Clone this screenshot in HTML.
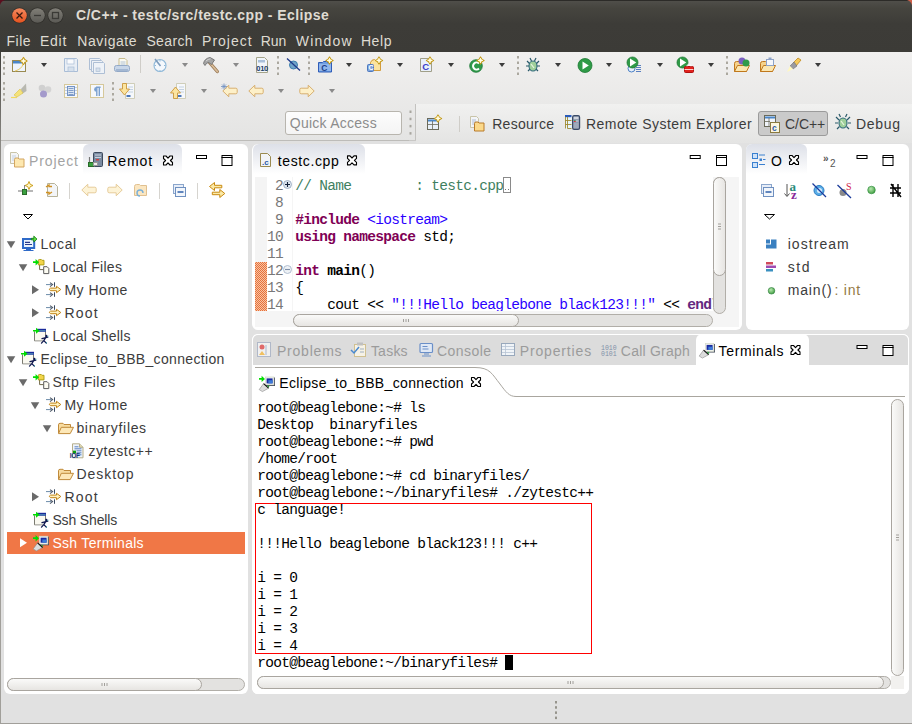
<!DOCTYPE html><html><head><meta charset="utf-8"><style>
html,body{margin:0;padding:0;}
body{width:912px;height:724px;position:relative;overflow:hidden;background:#e1e1e1;font-family:"Liberation Sans",sans-serif;}
div{position:absolute;box-sizing:border-box;}
.t{white-space:pre;line-height:1;}
</style></head><body>
<div style="left:0px;top:0px;width:912px;height:52px;background:linear-gradient(#3f3e3a 0px,#4f4e49 1.5px,#46453f 8px,#3d3c38 24px,#3c3b37 52px);"></div>
<div style="left:0px;top:0px;width:912px;height:1px;background:#2c2b28;"></div>
<svg style="position:absolute;left:0;top:0" width="912" height="8"><path d="M0 0H5Q1.2 1.2 0 5Z" fill="#5a0f1e"/><path d="M912 0H907Q910.8 1.2 912 5Z" fill="#d0604a"/></svg>
<svg style="position:absolute;left:0;top:0" width="70" height="30">
<defs><linearGradient id="gc" x1="0" y1="0" x2="0" y2="1"><stop offset="0" stop-color="#f68a5f"/><stop offset="1" stop-color="#e5531f"/></linearGradient>
<linearGradient id="gg" x1="0" y1="0" x2="0" y2="1"><stop offset="0" stop-color="#807e77"/><stop offset="1" stop-color="#5b5a55"/></linearGradient></defs>
<circle cx="19.5" cy="15.5" r="8" fill="#2f2e2a"/><circle cx="19.5" cy="15.5" r="7.3" fill="url(#gc)"/>
<path d="M16.5 12.5L22.5 18.5M22.5 12.5L16.5 18.5" stroke="#3a1a10" stroke-width="1.3"/>
<circle cx="37.5" cy="15.5" r="8" fill="#2f2e2a"/><circle cx="37.5" cy="15.5" r="7.3" fill="url(#gg)"/>
<path d="M34 15.5H41" stroke="#3b3a36" stroke-width="1.3"/>
<circle cx="55.5" cy="15.5" r="8" fill="#2f2e2a"/><circle cx="55.5" cy="15.5" r="7.3" fill="url(#gg)"/>
<rect x="52.5" y="12.5" width="6" height="6" fill="none" stroke="#3b3a36" stroke-width="1.3"/>
</svg>
<div class="t" style="left:76.00px;top:8px;font-size:14px;color:#dfdbd2;font-family:'Liberation Sans', sans-serif;font-weight:700;letter-spacing:0.431px;">C/C++ - testc/src/testc.cpp - Eclipse</div>
<div class="t" style="left:6.40px;top:34px;font-size:14px;color:#dfdbd2;font-family:'Liberation Sans', sans-serif;font-weight:400;letter-spacing:0.553px;">File</div>
<div class="t" style="left:40.00px;top:34px;font-size:14px;color:#dfdbd2;font-family:'Liberation Sans', sans-serif;font-weight:400;letter-spacing:0.750px;">Edit</div>
<div class="t" style="left:77.30px;top:34px;font-size:14px;color:#dfdbd2;font-family:'Liberation Sans', sans-serif;font-weight:400;letter-spacing:0.581px;">Navigate</div>
<div class="t" style="left:146.40px;top:34px;font-size:14px;color:#dfdbd2;font-family:'Liberation Sans', sans-serif;font-weight:400;letter-spacing:0.364px;">Search</div>
<div class="t" style="left:202.10px;top:34px;font-size:14px;color:#dfdbd2;font-family:'Liberation Sans', sans-serif;font-weight:400;letter-spacing:0.993px;">Project</div>
<div class="t" style="left:260.80px;top:34px;font-size:14px;color:#dfdbd2;font-family:'Liberation Sans', sans-serif;font-weight:400;letter-spacing:-0.145px;">Run</div>
<div class="t" style="left:295.80px;top:34px;font-size:14px;color:#dfdbd2;font-family:'Liberation Sans', sans-serif;font-weight:400;letter-spacing:1.192px;">Window</div>
<div class="t" style="left:360.90px;top:34px;font-size:14px;color:#dfdbd2;font-family:'Liberation Sans', sans-serif;font-weight:400;letter-spacing:0.577px;">Help</div>
<div style="left:1px;top:52px;width:911px;height:88px;background:linear-gradient(#f1f0ef 0px,#e4e4e3 88px);"></div>
<div style="left:0px;top:52px;width:1px;height:672px;background:linear-gradient(#3f3e3a 0px,#8a8883 90px,#a19f9a 150px,#a19f9a 672px);"></div>
<div style="left:1px;top:140px;width:911px;height:1px;background:#c9c8c6;"></div>
<div style="left:1px;top:141px;width:911px;height:553px;background:#e1e1e1;"></div>
<div style="left:1px;top:694px;width:911px;height:29px;background:#e1e1e1;"></div>
<div style="left:0px;top:723px;width:912px;height:1px;background:#a19f9a;"></div>
<div style="left:4px;top:144px;width:244px;height:550px;background:#fff;border-radius:6px;"></div>
<div style="left:252px;top:144px;width:490px;height:186px;background:#fff;border-radius:6px;"></div>
<div style="left:746px;top:144px;width:163px;height:186px;background:#fff;border-radius:6px;"></div>
<div style="left:252px;top:334px;width:657px;height:360px;background:#fff;border-radius:6px;"></div>
<svg style="position:absolute;left:0;top:0" width="912" height="141"><rect x="3" y="56.0" width="2" height="2.5" fill="#aba89f"/><rect x="3" y="61.5" width="2" height="2.5" fill="#aba89f"/><rect x="3" y="67.0" width="2" height="2.5" fill="#aba89f"/><rect x="3" y="72.5" width="2" height="2.5" fill="#aba89f"/><rect x="12.5" y="60.5" width="13" height="11" fill="#eef4fb" stroke="#9a8a50"/><rect x="13" y="61" width="12" height="2.5" fill="#4a86c8"/><path d="M15 71Q22 69 23 64" stroke="#e8c860" fill="none"/><path d="M23.5 57.4Q24.46 60.04 27.1 61Q24.46 61.96 23.5 64.6Q22.54 61.96 19.9 61Q22.54 60.04 23.5 57.4Z" fill="#fff3b8" stroke="#c39a1a" stroke-width="1.1" stroke-linejoin="round"/><path d="M23.5 58.6V63.39999999999999M21.099999999999998 61H25.900000000000002" stroke="#fffdf0" stroke-width="0.8"/><path d="M41 63h6l-3 4z" fill="#3c3c3c"/><path d="M64.5 58.5h12l1 1v12h-13z" fill="#e9eef5" stroke="#a9bdd6"/><rect x="67" y="59" width="7" height="5" fill="#fafbfd" stroke="#a9bdd6" stroke-width="0.7"/><rect x="68" y="67" width="6" height="4.5" fill="#d6e0ec" stroke="#a9bdd6" stroke-width="0.7"/><path d="M89.5 58.5h10l1 1v10h-11z" fill="#eef2f7" stroke="#aebfd5"/><path d="M91.5 60.5h10l1 1v10h-11z" fill="#eef2f7" stroke="#aebfd5"/><path d="M93.5 62.5h10l1 1v10h-11z" fill="#eef2f7" stroke="#aebfd5"/><rect x="96" y="68" width="4" height="3.5" fill="#d6e0ec" stroke="#aebfd5" stroke-width="0.7"/><path d="M119 58.5h6l2 2v6h-8z" fill="#fbfaf2" stroke="#c9bd8e"/><path d="M120.5 62h5M120.5 64h5" stroke="#9fb2cc" stroke-width="0.8"/><rect x="114.5" y="65.5" width="15" height="6" rx="2" fill="#c8d6e8" stroke="#93a9c7"/><rect x="116" y="69" width="12" height="2" fill="#a3b7d2"/><rect x="140" y="55" width="1" height="18" fill="#cfcdc8"/><circle cx="160" cy="65.5" r="6" fill="#f4f8fc" stroke="#8fb8d8" stroke-width="1.1"/><path d="M155 59L160.5 66" stroke="#7d9cbc" stroke-width="1.6"/><path d="M160 60v1.5M160 70v1.5M154.5 65.5h1.5M164 65.5h1.5" stroke="#8fb8d8"/><path d="M182 63h6l-3 4z" fill="#8a8a8a"/><path d="M209.5 62.5L217.3 71.5" stroke="#9a7a58" stroke-width="3.4" stroke-linecap="round"/><path d="M209.5 62.5L217.3 71.5" stroke="#d8bc98" stroke-width="1.8" stroke-linecap="round"/><path d="M203.5 63.5Q204.5 58.5 210 57.5L214.5 60L211.5 64.5L208.5 62.5Q206.5 62.5 205 65.5Z" fill="#a4a4a4" stroke="#6f6f6f" stroke-width="0.9" stroke-linejoin="round"/><path d="M206 61Q208 59 210.5 58.8" stroke="#d8d8d8" stroke-width="0.9" fill="none"/><path d="M233 63h6l-3 4z" fill="#8a8a8a"/><path d="M256.5 57.5h8l3 3v12h-11z" fill="#f1f5fa" stroke="#a5a48a"/><rect x="258" y="60" width="7" height="2.5" fill="#a9c0da"/><text x="256.3" y="71.3" font-family="Liberation Sans" font-weight="700" font-size="7.5" fill="#24406a" letter-spacing="-0.3">010</text><rect x="277" y="56.0" width="2" height="2.5" fill="#aba89f"/><rect x="277" y="61.5" width="2" height="2.5" fill="#aba89f"/><rect x="277" y="67.0" width="2" height="2.5" fill="#aba89f"/><rect x="277" y="72.5" width="2" height="2.5" fill="#aba89f"/><circle cx="293.5" cy="65" r="4" fill="#6fa3c8" stroke="#3f7fae"/><path d="M287 58.5L300 70.5" stroke="#1f3a8a" stroke-width="1.3"/><rect x="308" y="56.0" width="2" height="2.5" fill="#aba89f"/><rect x="308" y="61.5" width="2" height="2.5" fill="#aba89f"/><rect x="308" y="67.0" width="2" height="2.5" fill="#aba89f"/><rect x="308" y="72.5" width="2" height="2.5" fill="#aba89f"/><path d="M318.5 62.5h4l1 -1h3l1 1h4v9.5h-13z" fill="#6e9ee0" stroke="#2f5cb8"/><rect x="319" y="64" width="12" height="7" fill="#8fb6ec"/><text x="321.3" y="70.8" font-family="Liberation Sans" font-weight="700" font-size="8.5" fill="#1d3f8a">C</text><path d="M329.5 56.9Q330.46 59.54 333.1 60.5Q330.46 61.46 329.5 64.1Q328.54 61.46 325.9 60.5Q328.54 59.54 329.5 56.9Z" fill="#fff3b8" stroke="#c39a1a" stroke-width="1.1" stroke-linejoin="round"/><path d="M329.5 58.1V62.89999999999999M327.09999999999997 60.5H331.90000000000003" stroke="#fffdf0" stroke-width="0.8"/><path d="M346 63h6l-3 4z" fill="#3c3c3c"/><path d="M370.5 62.5q1 -3 4 -3l1 1h5v10h-10z" fill="#fbe3a0" stroke="#d39c3c"/><rect x="367.5" y="64.5" width="6" height="7" rx="1" fill="#7ea3da" stroke="#4d78bf"/><text x="368.4" y="70.4" font-family="Liberation Sans" font-weight="700" font-size="7" fill="#fff">C</text><path d="M379 56.9Q379.96 59.54 382.6 60.5Q379.96 61.46 379 64.1Q378.04 61.46 375.4 60.5Q378.04 59.54 379 56.9Z" fill="#fff3b8" stroke="#c39a1a" stroke-width="1.1" stroke-linejoin="round"/><path d="M379 58.1V62.89999999999999M376.59999999999997 60.5H381.40000000000003" stroke="#fffdf0" stroke-width="0.8"/><path d="M397 63h6l-3 4z" fill="#3c3c3c"/><path d="M420.5 58.5h9l2 2v11h-11z" fill="#e9f0fa" stroke="#a09f88"/><text x="422.2" y="69.8" font-family="Liberation Sans" font-weight="700" font-size="9.5" fill="#3b3fc8">C</text><path d="M430 56.9Q430.96 59.54 433.6 60.5Q430.96 61.46 430 64.1Q429.04 61.46 426.4 60.5Q429.04 59.54 430 56.9Z" fill="#fff3b8" stroke="#c39a1a" stroke-width="1.1" stroke-linejoin="round"/><path d="M430 58.1V62.89999999999999M427.59999999999997 60.5H432.40000000000003" stroke="#fffdf0" stroke-width="0.8"/><path d="M448 63h6l-3 4z" fill="#3c3c3c"/><circle cx="476" cy="66" r="6.3" fill="#2f9a4a" stroke="#1f7a3a" stroke-width="0.8"/><path d="M479 63.5A3.5 3.5 0 1 0 479 68.5" stroke="#fff" stroke-width="2" fill="none"/><path d="M480.5 56.9Q481.46 59.54 484.1 60.5Q481.46 61.46 480.5 64.1Q479.54 61.46 476.9 60.5Q479.54 59.54 480.5 56.9Z" fill="#fff3b8" stroke="#c39a1a" stroke-width="1.1" stroke-linejoin="round"/><path d="M480.5 58.1V62.89999999999999M478.09999999999997 60.5H482.90000000000003" stroke="#fffdf0" stroke-width="0.8"/><path d="M499 63h6l-3 4z" fill="#3c3c3c"/><rect x="517" y="56.0" width="2" height="2.5" fill="#aba89f"/><rect x="517" y="61.5" width="2" height="2.5" fill="#aba89f"/><rect x="517" y="67.0" width="2" height="2.5" fill="#aba89f"/><rect x="517" y="72.5" width="2" height="2.5" fill="#aba89f"/><path d="M527 61l3 3M539 61l-3 3M526 66h3M540 66h-3M528 71l2.5 -2.5M538 71l-2.5 -2.5M530 58l1.5 3M536 58l-1.5 3" stroke="#2a5a6a" stroke-width="1.2"/><ellipse cx="533" cy="66" rx="4" ry="5" fill="#9fcf9a" stroke="#2f6a7a" stroke-width="1.1"/><path d="M531 64l3 4" stroke="#e8f5e0" stroke-width="1.2"/><path d="M555 63h6l-3 4z" fill="#3c3c3c"/><circle cx="585" cy="65.5" r="7" fill="#2f9a47" stroke="#1e7a35" stroke-width="0.8"/><path d="M582.5 61.5L588.8 65.5L582.5 69.5Z" fill="#fff"/><path d="M606 63h6l-3 4z" fill="#3c3c3c"/><circle cx="631.5" cy="68.5" r="3.5" fill="#e7f0fb" stroke="#4a7fc5"/><path d="M636 65.5h5M636 67.5h5M636 69.5h5M636 71.5h5" stroke="#5a80c0" stroke-width="1"/><circle cx="632.5" cy="62.5" r="5.5" fill="#2f9a47" stroke="#1e7a35" stroke-width="0.8"/><path d="M630.0 58.5L636.3 62.5L630.0 66.5Z" fill="#fff"/><path d="M657 63h6l-3 4z" fill="#3c3c3c"/><circle cx="682.5" cy="62.5" r="5.5" fill="#2f9a47" stroke="#1e7a35" stroke-width="0.8"/><path d="M680.0 58.5L686.3 62.5L680.0 66.5Z" fill="#fff"/><rect x="684.5" y="66.5" width="9" height="6" rx="1" fill="#e2211c" stroke="#b01010"/><path d="M687 66.5v-1.5h4v1.5M684.5 69.5h9" stroke="#fff" stroke-width="0.8" fill="none"/><path d="M708 63h6l-3 4z" fill="#3c3c3c"/><rect x="726" y="56.0" width="2" height="2.5" fill="#aba89f"/><rect x="726" y="61.5" width="2" height="2.5" fill="#aba89f"/><rect x="726" y="67.0" width="2" height="2.5" fill="#aba89f"/><rect x="726" y="72.5" width="2" height="2.5" fill="#aba89f"/><path d="M734.5 63.5q0 -2 2 -2h3l1 1h6v9h-12z" fill="#f6d28a" stroke="#c0781c"/><path d="M734.5 71.5l3 -6h12l-3 6z" fill="#fbe6b0" stroke="#c0781c"/><circle cx="742" cy="61" r="3.5" fill="#7a5fc0"/><circle cx="746" cy="63" r="3.5" fill="#2f9a4a"/><path d="M760.5 63.5q0 -2 2 -2h3l1 1h6v9h-12z" fill="#f6d28a" stroke="#c0781c"/><path d="M760.5 71.5l3 -6h12l-3 6z" fill="#fbe6b0" stroke="#c0781c"/><rect x="766.5" y="59.5" width="7" height="6" fill="#f4f6fb" stroke="#8ea3c8"/><rect x="768.5" y="57.5" width="3" height="2" fill="#8ea3c8"/><path d="M793 63L798 58L801 60L796 66z" fill="#f5c95a" stroke="#c08a20" stroke-width="0.8"/><path d="M790 66L794 62L797 66L793 69z" fill="#9a9aa0" stroke="#707070" stroke-width="0.6"/><path d="M787 72L790 66L793 69z" fill="#fff8c0"/><path d="M815 63h6l-3 4z" fill="#3c3c3c"/><rect x="3" y="82.0" width="2" height="2.5" fill="#aba89f"/><rect x="3" y="87.5" width="2" height="2.5" fill="#aba89f"/><rect x="3" y="93.0" width="2" height="2.5" fill="#aba89f"/><rect x="3" y="98.5" width="2" height="2.5" fill="#aba89f"/><path d="M21 89L26 83.5L26.5 91L22 94z" fill="#b8b8b0"/><path d="M14 95L20 89L23 93L17 97z" fill="#f5e27a" stroke="#d6c04a" stroke-width="0.6"/><path d="M11 97.5h6" stroke="#f0d860" stroke-width="1.2"/><circle cx="42" cy="88" r="3.3" fill="#d0d0d0"/><circle cx="48" cy="89.5" r="3.3" fill="#d4d4d4"/><circle cx="43.5" cy="94" r="3.5" fill="#a49acb"/><rect x="64.5" y="84.5" width="13" height="13" fill="#f6f8fb" stroke="#d6c89a"/><rect x="67.5" y="86.5" width="7" height="9" fill="#dce6f2" stroke="#6a8cc0" stroke-width="0.9"/><path d="M68.5 88.5h5M68.5 90.5h5M68.5 92.5h5M68.5 94.5h5" stroke="#6a8cc0" stroke-width="0.8"/><path d="M66 87v1M66 90v1M66 93v1M76 87v1M76 90v1M76 93v1" stroke="#8aa4c8" stroke-width="1"/><rect x="90.5" y="84.5" width="13" height="13" fill="#f6f8fb" stroke="#d6c89a"/><path d="M96.5 87a2.4 2.4 0 0 0 0 4.8z" fill="#7aa0d0"/><path d="M96.8 87v9M99.3 87v9M96 87.3h4.6" stroke="#7aa0d0" stroke-width="1.4"/><rect x="112" y="82.0" width="2" height="2.5" fill="#aba89f"/><rect x="112" y="87.5" width="2" height="2.5" fill="#aba89f"/><rect x="112" y="93.0" width="2" height="2.5" fill="#aba89f"/><rect x="112" y="98.5" width="2" height="2.5" fill="#aba89f"/><path d="M125.5 83.5h9v15h-9z" fill="#f6f8fb" stroke="#c7c4aa" stroke-width="0.8"/><path d="M128 87h5M128 89.5h5M128 92h5" stroke="#b8c8dc" stroke-width="0.8"/><rect x="126.5" y="95" width="4" height="2" fill="#4a76b8"/><path d="M122.5 83.5h4v5.5h3l-5 6l-5 -6h3z" fill="#fbe4a0" stroke="#c9963a" stroke-width="0.9" stroke-linejoin="round"/><path d="M150 89h6l-3 4z" fill="#8a8a8a"/><path d="M176.5 83.5h9v15h-9z" fill="#f6f8fb" stroke="#c7c4aa" stroke-width="0.8"/><path d="M179 87h5M179 89.5h5M179 92h5" stroke="#b8c8dc" stroke-width="0.8"/><rect x="177.5" y="95" width="4" height="2" fill="#4a76b8"/><path d="M173.5 98.5h4v-5.5h3l-5 -6l-5 6h3z" fill="#fbe4a0" stroke="#c9963a" stroke-width="0.9" stroke-linejoin="round"/><path d="M201 89h6l-3 4z" fill="#8a8a8a"/><path d="M222.8 91L228.8 85.2V88.2H235.8Q237.2 88.2 237.2 89.6V92.4Q237.2 93.8 235.8 93.8H228.8V96.8Z" fill="#fdf0c8" stroke="#d8b070" stroke-width="1" stroke-linejoin="round"/><path d="M224 83.5v6M221 86.5h6M222 84.5l4 4M226 84.5l-4 4" stroke="#6f8fc0" stroke-width="0.8"/><path d="M248.8 91L254.8 85.2V88.2H261.8Q263.2 88.2 263.2 89.6V92.4Q263.2 93.8 261.8 93.8H254.8V96.8Z" fill="#fdf0c8" stroke="#d8b070" stroke-width="1" stroke-linejoin="round"/><path d="M278 89h6l-3 4z" fill="#8a8a8a"/><path d="M314.2 91L308.2 85.2V88.2H301.2Q299.8 88.2 299.8 89.6V92.4Q299.8 93.8 301.2 93.8H308.2V96.8Z" fill="#fdf0c8" stroke="#d8b070" stroke-width="1" stroke-linejoin="round"/><path d="M329 89h6l-3 4z" fill="#8a8a8a"/></svg>
<div style="left:83px;top:144px;width:99px;height:30px;background:linear-gradient(#dde0e8,#ffffff);border-radius:6px 6px 0 0;"></div>
<div style="left:7px;top:532px;width:238px;height:22px;background:#f07746;"></div>
<div class="t" style="left:40.40px;top:237px;font-size:14px;color:#3c3c3c;font-family:'Liberation Sans', sans-serif;font-weight:400;letter-spacing:0.560px;">Local</div>
<div class="t" style="left:52.40px;top:260px;font-size:14px;color:#3c3c3c;font-family:'Liberation Sans', sans-serif;font-weight:400;letter-spacing:0.258px;">Local Files</div>
<div class="t" style="left:64.40px;top:283px;font-size:14px;color:#3c3c3c;font-family:'Liberation Sans', sans-serif;font-weight:400;letter-spacing:0.513px;">My Home</div>
<div class="t" style="left:64.40px;top:306px;font-size:14px;color:#3c3c3c;font-family:'Liberation Sans', sans-serif;font-weight:400;letter-spacing:1.220px;">Root</div>
<div class="t" style="left:52.40px;top:329px;font-size:14px;color:#3c3c3c;font-family:'Liberation Sans', sans-serif;font-weight:400;letter-spacing:0.231px;">Local Shells</div>
<div class="t" style="left:40.40px;top:352px;font-size:14px;color:#3c3c3c;font-family:'Liberation Sans', sans-serif;font-weight:400;letter-spacing:0.337px;">Eclipse_to_BBB_connection</div>
<div class="t" style="left:52.40px;top:375px;font-size:14px;color:#3c3c3c;font-family:'Liberation Sans', sans-serif;font-weight:400;letter-spacing:0.502px;">Sftp Files</div>
<div class="t" style="left:64.40px;top:398px;font-size:14px;color:#3c3c3c;font-family:'Liberation Sans', sans-serif;font-weight:400;letter-spacing:0.513px;">My Home</div>
<div class="t" style="left:76.40px;top:421px;font-size:14px;color:#3c3c3c;font-family:'Liberation Sans', sans-serif;font-weight:400;letter-spacing:0.670px;">binaryfiles</div>
<div class="t" style="left:88.40px;top:444px;font-size:14px;color:#3c3c3c;font-family:'Liberation Sans', sans-serif;font-weight:400;letter-spacing:0.535px;">zytestc++</div>
<div class="t" style="left:76.40px;top:467px;font-size:14px;color:#3c3c3c;font-family:'Liberation Sans', sans-serif;font-weight:400;letter-spacing:0.970px;">Desktop</div>
<div class="t" style="left:64.40px;top:490px;font-size:14px;color:#3c3c3c;font-family:'Liberation Sans', sans-serif;font-weight:400;letter-spacing:1.220px;">Root</div>
<div class="t" style="left:52.40px;top:513px;font-size:14px;color:#3c3c3c;font-family:'Liberation Sans', sans-serif;font-weight:400;letter-spacing:-0.150px;">Ssh Shells</div>
<div class="t" style="left:52.40px;top:536px;font-size:14px;color:#fff;font-family:'Liberation Sans', sans-serif;font-weight:400;letter-spacing:0.297px;">Ssh Terminals</div>
<svg style="position:absolute;left:0;top:0" width="250" height="724"><defs><linearGradient id="thumbh" x1="0" y1="0" x2="0" y2="1"><stop offset="0" stop-color="#fbfbfa"/><stop offset="1" stop-color="#e6e4e1"/></linearGradient><linearGradient id="thumbv" x1="0" y1="0" x2="1" y2="0"><stop offset="0" stop-color="#fbfbfa"/><stop offset="1" stop-color="#e6e4e1"/></linearGradient></defs><path d="M10.5 152.5h6l2 2v9h-8z" fill="#f3f5f8" stroke="#c9c4a8"/><path d="M12 156h4M12 158h4M12 160h4" stroke="#b8c8dc" stroke-width="0.8"/><path d="M14.5 159.5q0-1.5 1.5-1.5h2l1 1h5v8h-9.5z" fill="#fde8b0" stroke="#d3a560"/><rect x="93.5" y="152.5" width="9" height="14" rx="1" fill="#7a8aa0" stroke="#3d4a5e"/><path d="M95 155h6M95 157.5h6" stroke="#c8d2e0"/><rect x="96" y="159" width="3" height="1.5" fill="#d04040"/><path d="M89.5 157v7" stroke="#777" stroke-width="1.2"/><rect x="88.5" y="162.5" width="5" height="4" fill="#3aa040" stroke="#2a6a2a"/><rect x="93.5" y="162.5" width="4" height="3" fill="#eee" stroke="#999"/><path d="M163.50 156.00L166.00 156.00L168.00 158.10L170.00 156.00L172.50 156.00L172.50 158.50L170.40 160.50L172.50 162.50L172.50 165.00L170.00 165.00L168.00 162.90L166.00 165.00L163.50 165.00L163.50 162.50L165.60 160.50L163.50 158.50Z" fill="#fff" stroke="#000" stroke-width="1.1" stroke-linejoin="round"/><rect x="196.5" y="155.5" width="10" height="3" fill="#fff" stroke="#000"/><rect x="222.0" y="155.5" width="10" height="10" fill="#fff" stroke="#000"/><path d="M221.5 157.5h11" stroke="#000"/><path d="M18 191h15" stroke="#888" stroke-width="1.2"/><rect x="22.5" y="189.5" width="4" height="5" fill="#3aa040" stroke="#2a6a2a"/><path d="M24.5 185v4" stroke="#888"/><path d="M29 181.5l1.2 2.8l2.8 1.2l-2.8 1.2l-1.2 2.8l-1.2-2.8l-2.8-1.2l2.8-1.2z" fill="#fff6c8" stroke="#c89a10" stroke-width="0.9"/><path d="M47.5 183.5h7l3 3v10h-10z" fill="#f3f5f8" stroke="#b7b39a"/><path d="M46 187l3-2v1.5h3M52 192l-3 2v-1.5h-3" stroke="#d09020" stroke-width="1.3" fill="none"/><rect x="69" y="183" width="1" height="16" fill="#d6d4cf"/><rect x="159" y="183" width="1" height="16" fill="#d6d4cf"/><rect x="197" y="183" width="1" height="16" fill="#d6d4cf"/><path d="M81.8 190L87.8 184.2V187.2H94.8Q96.2 187.2 96.2 188.6V191.4Q96.2 192.8 94.8 192.8H87.8V195.8Z" fill="#fdf3d6" stroke="#e6cc9a" stroke-width="1" stroke-linejoin="round"/><path d="M122.2 190L116.2 184.2V187.2H109.2Q107.8 187.2 107.8 188.6V191.4Q107.8 192.8 109.2 192.8H116.2V195.8Z" fill="#fdf3d6" stroke="#e6cc9a" stroke-width="1" stroke-linejoin="round"/><path d="M134.5 186.5q0-2 2-2h3l1 1h6v10h-12z" fill="#fbe6c0" stroke="#e0c090"/><path d="M140 196a3 3 0 1 1 3 -3" stroke="#7ab0d8" stroke-width="1.4" fill="none"/><rect x="173.5" y="184.5" width="10" height="9" fill="#e8eef8" stroke="#8ba6cc"/><rect x="175.5" y="187.5" width="10" height="9" fill="#f2f6fb" stroke="#6f90c0"/><path d="M177.5 192h6" stroke="#2f5fa8" stroke-width="1.5"/><path d="M209.5 186.5L214.5 182.5V185.3H221.8V187.8H214.5V190.5Z" fill="#fbeaa8" stroke="#c98a10" stroke-width="1" stroke-linejoin="round"/><path d="M224.8 193.5L219.8 189.5V192.2H212.3V194.7H219.8V197.5Z" fill="#fbeaa8" stroke="#c98a10" stroke-width="1" stroke-linejoin="round"/><path d="M23.5 214.5h9l-4.5 4.5z" fill="#fff" stroke="#000"/><path d="M6.8 241.3h8.5l-4.25 7z" fill="#6a6a6a"/><rect x="23" y="239.0" width="11.2" height="9" fill="#eaf4fc" stroke="#2f6ac8" stroke-width="2"/><path d="M25 242.4h5M25 244.5h7" stroke="#2a3a8a" stroke-width="1.1"/><path d="M26 248.8h5v1.3h2.5v1h-10v-1h2.5z" fill="#2f6ac8"/><path d="M31.3 238.3h2.5v-2.2l3.2 3l-3.2 3v-2.2h-2.5z" fill="#60e040" stroke="#107a10" stroke-width="0.8"/><path d="M18.8 264.3h8.5l-4.25 7z" fill="#6a6a6a"/><path d="M39.6 264.8V269.6H43.5" stroke="#706848" stroke-width="1" fill="none"/><path d="M38.3 260.5q0-1 1-1h2l0.8 0.8h1.9v4.6h-5.7z" fill="#f2d44a" stroke="#a89a10" stroke-width="0.9"/><path d="M33 261.3h2.6v-2.3l3.4 3.2l-3.4 3.2v-2.3h-2.6z" fill="#00dd00"/><path d="M43.7 266.7h3.4l1.7 1.7v5.2h-5.1z" fill="#fdfcf2" stroke="#5a5a5a" stroke-width="1"/><path d="M32 285.2v9l7 -4.5z" fill="#6a6a6a"/><path d="M46 284.6h5.5M46 294.6h5.5" stroke="#6a8aa8" stroke-width="1"/><path d="M50 282.6l2.6 2l-2.6 2M50 292.6l2.6 2l-2.6 2" stroke="#505a68" stroke-width="1.1" fill="none"/><path d="M54.5 282.3v4.5M54.5 292.3v4.5" stroke="#3a4a60" stroke-width="1"/><path d="M49.2 289.3L50.5 288.1H56.5V286.3L60.8 289.5L56.5 292.7V290.7H50.5Z" fill="#fff2c0" stroke="#c08418" stroke-width="1" stroke-linejoin="round"/><path d="M32 308.2v9l7 -4.5z" fill="#6a6a6a"/><path d="M46 307.6h5.5M46 317.6h5.5" stroke="#6a8aa8" stroke-width="1"/><path d="M50 305.6l2.6 2l-2.6 2M50 315.6l2.6 2l-2.6 2" stroke="#505a68" stroke-width="1.1" fill="none"/><path d="M54.5 305.3v4.5M54.5 315.3v4.5" stroke="#3a4a60" stroke-width="1"/><path d="M49.2 312.3L50.5 311.1H56.5V309.3L60.8 312.5L56.5 315.7V313.7H50.5Z" fill="#fff2c0" stroke="#c08418" stroke-width="1" stroke-linejoin="round"/><path d="M34.5 331.3V340.8H43M45.5 331.3V335.3" stroke="#7a7a70" fill="none"/><rect x="35" y="331.8" width="10" height="8.5" fill="#faf9f0"/><rect x="37" y="328.8" width="9" height="3" fill="#1a2a9a"/><path d="M38 330.8h7.5" stroke="#6ac0c8" stroke-width="0.8"/><path d="M33 330.1h3v-2.3l3.6 3l-3.6 3v-2.3h-3z" fill="#00dd00"/><circle cx="46.3" cy="335.90000000000003" r="1.2" fill="#101850"/><path d="M45.8 337.3L43.8 340.6M42 338.6L47.8 337.1M43.8 340.6L41.5 343.1M43.8 340.6L46.3 343.1" stroke="#101850" stroke-width="1.3" stroke-linecap="round"/><path d="M47.5 336.8l1 -1M46 342.8h1" stroke="#30b0b0" stroke-width="0.9"/><path d="M6.8 356.3h8.5l-4.25 7z" fill="#6a6a6a"/><path d="M22.5 354.3V363.8H31M33.5 354.3V358.3" stroke="#7a7a70" fill="none"/><rect x="23" y="354.8" width="10" height="8.5" fill="#faf9f0"/><rect x="25" y="351.8" width="9" height="3" fill="#1a2a9a"/><path d="M26 353.8h7.5" stroke="#6ac0c8" stroke-width="0.8"/><path d="M21 353.1h3v-2.3l3.6 3l-3.6 3v-2.3h-3z" fill="#00dd00"/><circle cx="34.3" cy="358.90000000000003" r="1.2" fill="#101850"/><path d="M33.8 360.3L31.8 363.6M30 361.6L35.8 360.1M31.8 363.6L29.5 366.1M31.8 363.6L34.3 366.1" stroke="#101850" stroke-width="1.3" stroke-linecap="round"/><path d="M35.5 359.8l1 -1M34 365.8h1" stroke="#30b0b0" stroke-width="0.9"/><path d="M18.8 379.3h8.5l-4.25 7z" fill="#6a6a6a"/><path d="M39.6 379.8V384.6H43.5" stroke="#706848" stroke-width="1" fill="none"/><path d="M38.3 375.5q0-1 1-1h2l0.8 0.8h1.9v4.6h-5.7z" fill="#f2d44a" stroke="#a89a10" stroke-width="0.9"/><path d="M33 376.3h2.6v-2.3l3.4 3.2l-3.4 3.2v-2.3h-2.6z" fill="#00dd00"/><path d="M43.7 381.7h3.4l1.7 1.7v5.2h-5.1z" fill="#fdfcf2" stroke="#5a5a5a" stroke-width="1"/><path d="M30.8 402.3h8.5l-4.25 7z" fill="#6a6a6a"/><path d="M46 399.6h5.5M46 409.6h5.5" stroke="#6a8aa8" stroke-width="1"/><path d="M50 397.6l2.6 2l-2.6 2M50 407.6l2.6 2l-2.6 2" stroke="#505a68" stroke-width="1.1" fill="none"/><path d="M54.5 397.3v4.5M54.5 407.3v4.5" stroke="#3a4a60" stroke-width="1"/><path d="M49.2 404.3L50.5 403.1H56.5V401.3L60.8 404.5L56.5 407.7V405.7H50.5Z" fill="#fff2c0" stroke="#c08418" stroke-width="1" stroke-linejoin="round"/><path d="M42.8 425.3h8.5l-4.25 7z" fill="#6a6a6a"/><path d="M58.5 433.1V424.8q0-1.5 1.5-1.5h3l1 1.2h6.5v2.5" fill="#f8dca0" stroke="#c08a3a"/><path d="M58.5 433.6l2.8 -6.3h12.2l-3.3 6.3z" fill="#fde8b8" stroke="#c08a3a" stroke-linejoin="round"/><path d="M72.5 443.8h7l3.5 3.5v10.5h-10.5z" fill="#eef3fa" stroke="#b5ae8a"/><path d="M79.5 443.8v3.5h3.5" fill="#e0d8b0" stroke="#b5ae8a"/><path d="M74.5 446.8h4M74.5 448.8h7M76.5 450.8h5M76.5 452.8h5M77.5 454.8h4" stroke="#5a80c0" stroke-width="1"/><rect x="73" y="450.6" width="3" height="3" fill="#109a10"/><text x="69.7" y="458.1" font-family="Liberation Sans" font-weight="700" font-size="6.5" fill="#15357a" letter-spacing="-0.3">IOF</text><path d="M58.5 479.1V470.8q0-1.5 1.5-1.5h3l1 1.2h6.5v2.5" fill="#f8dca0" stroke="#c08a3a"/><path d="M58.5 479.6l2.8 -6.3h12.2l-3.3 6.3z" fill="#fde8b8" stroke="#c08a3a" stroke-linejoin="round"/><path d="M32 492.2v9l7 -4.5z" fill="#6a6a6a"/><path d="M46 491.6h5.5M46 501.6h5.5" stroke="#6a8aa8" stroke-width="1"/><path d="M50 489.6l2.6 2l-2.6 2M50 499.6l2.6 2l-2.6 2" stroke="#505a68" stroke-width="1.1" fill="none"/><path d="M54.5 489.3v4.5M54.5 499.3v4.5" stroke="#3a4a60" stroke-width="1"/><path d="M49.2 496.3L50.5 495.1H56.5V493.3L60.8 496.5L56.5 499.7V497.7H50.5Z" fill="#fff2c0" stroke="#c08418" stroke-width="1" stroke-linejoin="round"/><path d="M34.5 515.3V524.8H43M45.5 515.3V519.3" stroke="#7a7a70" fill="none"/><rect x="35" y="515.8" width="10" height="8.5" fill="#faf9f0"/><rect x="37" y="512.8" width="9" height="3" fill="#1a2a9a"/><path d="M38 514.8h7.5" stroke="#6ac0c8" stroke-width="0.8"/><path d="M33 514.0999999999999h3v-2.3l3.6 3l-3.6 3v-2.3h-3z" fill="#00dd00"/><circle cx="46.3" cy="519.9" r="1.2" fill="#101850"/><path d="M45.8 521.3L43.8 524.5999999999999M42 522.5999999999999L47.8 521.0999999999999M43.8 524.5999999999999L41.5 527.0999999999999M43.8 524.5999999999999L46.3 527.0999999999999" stroke="#101850" stroke-width="1.3" stroke-linecap="round"/><path d="M47.5 520.8l1 -1M46 526.8h1" stroke="#30b0b0" stroke-width="0.9"/><path d="M20 538.2v9l7 -4.5z" fill="#ffffff"/><path d="M48.3 536.8V544.5999999999999H40" stroke="#3a4252" stroke-width="1.3" fill="none"/><rect x="39.5" y="536.3" width="8.3" height="7.8" fill="#f2f4ee" stroke="#d6dace" stroke-width="0.8"/><rect x="40.6" y="537.6999999999999" width="6" height="5" fill="#1a2aa0"/><rect x="42.3" y="539.5" width="4.3" height="3.2" fill="#3a7ad8"/><path d="M33 537.3h2.6v-2.3l3.4 3.2l-3.4 3.2v-2.3h-2.6z" fill="#00dd00"/><path d="M33.2 548.9L37.6 542.9L42.6 547.5L36.4 550.9Z" fill="#dcdcdc" stroke="#8a8a8a" stroke-width="0.6"/><path d="M37.6 542.9L42.6 547.5" stroke="#111" stroke-width="1.1"/><path d="M41.5 544.8l1.5 1.5" stroke="#2a9a3a" stroke-width="1.2"/><rect x="7.5" y="678.5" width="237" height="12" rx="6.0" fill="#e3e2e0" stroke="#b1aea8"/><rect x="7.5" y="678.5" width="194" height="12" rx="6.0" fill="url(#thumbh)" stroke="#a9a59f"/><path d="M102.0 683v3M104.5 683v3M107.0 683v3" stroke="#8d8a85" stroke-width="0.8"/></svg>
<div class="t" style="left:29.00px;top:154px;font-size:14px;color:#a3a3a3;font-family:'Liberation Sans', sans-serif;font-weight:400;letter-spacing:0.893px;">Project</div>
<div class="t" style="left:107.20px;top:154px;font-size:14px;color:#000;font-family:'Liberation Sans', sans-serif;font-weight:400;letter-spacing:0.942px;">Remot</div>
<div style="left:253px;top:144px;width:112px;height:30px;background:linear-gradient(#dde0e8,#ffffff);border-radius:6px 6px 0 0;"></div>
<svg style="position:absolute;left:0;top:0" width="912" height="724"><defs><linearGradient id="thumbh" x1="0" y1="0" x2="0" y2="1"><stop offset="0" stop-color="#fbfbfa"/><stop offset="1" stop-color="#e6e4e1"/></linearGradient><linearGradient id="thumbv" x1="0" y1="0" x2="1" y2="0"><stop offset="0" stop-color="#fbfbfa"/><stop offset="1" stop-color="#e6e4e1"/></linearGradient></defs><path d="M260.5 153.5h7l3 3v10h-10z" fill="#f2f4f8" stroke="#9a8a50"/><text x="262" y="165" font-family="Liberation Sans" font-weight="700" font-size="8" fill="#2a5aa8">.c</text><path d="M347.50 155.90L350.00 155.90L352.00 158.00L354.00 155.90L356.50 155.90L356.50 158.40L354.40 160.40L356.50 162.40L356.50 164.90L354.00 164.90L352.00 162.80L350.00 164.90L347.50 164.90L347.50 162.40L349.60 160.40L347.50 158.40Z" fill="#fff" stroke="#000" stroke-width="1.1" stroke-linejoin="round"/><rect x="690.2" y="155.5" width="10" height="3" fill="#fff" stroke="#000"/><rect x="716.5" y="155.5" width="10" height="10" fill="#fff" stroke="#000"/><path d="M716 157.5h11" stroke="#000"/><rect x="255" y="177" width="12" height="134" fill="#f4f4f4"/><defs><pattern id="hatch" width="2" height="2" patternUnits="userSpaceOnUse"><rect width="2" height="2" fill="#f6c4a4"/><rect width="1" height="1" fill="#e8703a"/><rect x="1" y="1" width="1" height="1" fill="#e8703a"/></pattern></defs><rect x="255" y="262" width="12" height="49" fill="url(#hatch)"/><rect x="292" y="177" width="1" height="134" fill="#f5f5f5"/><circle cx="287.5" cy="184.5" r="4" fill="#dfe6ef" stroke="#8fa3bd" stroke-width="0.8"/><path d="M285 184.5h5M287.5 182v5" stroke="#10203a" stroke-width="1.1"/><circle cx="287.5" cy="269.5" r="4" fill="#eef2f6" stroke="#9fb0c5" stroke-width="0.8"/><path d="M285 269.5h5" stroke="#8090a8" stroke-width="1.1"/></svg>
<div class="t" style="left:277.70px;top:154px;font-size:14px;color:#000;font-family:'Liberation Sans', sans-serif;font-weight:400;letter-spacing:0.638px;">testc.cpp</div>
<div class="t" style="left:275.00px;top:179px;font-size:14.5px;color:#787878;font-family:'Liberation Mono', monospace;font-weight:400;letter-spacing:-0.700px">2</div>
<div class="t" style="left:295.20px;top:179px;font-size:14.5px;color:#3f7f5f;font-family:'Liberation Mono', monospace;font-weight:400;letter-spacing:-0.700px">// Name        : testc.cpp</div>
<div class="t" style="left:275.00px;top:196px;font-size:14.5px;color:#787878;font-family:'Liberation Mono', monospace;font-weight:400;letter-spacing:-0.700px">8</div>
<div class="t" style="left:275.00px;top:213px;font-size:14.5px;color:#787878;font-family:'Liberation Mono', monospace;font-weight:400;letter-spacing:-0.700px">9</div>
<div class="t" style="left:295.20px;top:213px;font-size:14.5px;color:#7f0055;font-family:'Liberation Mono', monospace;font-weight:700;letter-spacing:-0.700px">#include</div>
<div class="t" style="left:367.20px;top:213px;font-size:14.5px;color:#2a00ff;font-family:'Liberation Mono', monospace;font-weight:400;letter-spacing:-0.700px">&lt;iostream&gt;</div>
<div class="t" style="left:267.00px;top:230px;font-size:14.5px;color:#787878;font-family:'Liberation Mono', monospace;font-weight:400;letter-spacing:-0.700px">10</div>
<div class="t" style="left:295.20px;top:230px;font-size:14.5px;color:#7f0055;font-family:'Liberation Mono', monospace;font-weight:700;letter-spacing:-0.700px">using namespace</div>
<div class="t" style="left:423.20px;top:230px;font-size:14.5px;color:#000;font-family:'Liberation Mono', monospace;font-weight:400;letter-spacing:-0.700px">std;</div>
<div class="t" style="left:267.00px;top:247px;font-size:14.5px;color:#787878;font-family:'Liberation Mono', monospace;font-weight:400;letter-spacing:-0.700px">11</div>
<div class="t" style="left:267.00px;top:264px;font-size:14.5px;color:#787878;font-family:'Liberation Mono', monospace;font-weight:400;letter-spacing:-0.700px">12</div>
<div class="t" style="left:295.20px;top:264px;font-size:14.5px;color:#7f0055;font-family:'Liberation Mono', monospace;font-weight:700;letter-spacing:-0.700px">int</div>
<div class="t" style="left:327.20px;top:264px;font-size:14.5px;color:#000;font-family:'Liberation Mono', monospace;font-weight:700;letter-spacing:-0.700px">main</div>
<div class="t" style="left:359.20px;top:264px;font-size:14.5px;color:#000;font-family:'Liberation Mono', monospace;font-weight:400;letter-spacing:-0.700px">()</div>
<div class="t" style="left:267.00px;top:281px;font-size:14.5px;color:#787878;font-family:'Liberation Mono', monospace;font-weight:400;letter-spacing:-0.700px">13</div>
<div class="t" style="left:295.20px;top:281px;font-size:14.5px;color:#000;font-family:'Liberation Mono', monospace;font-weight:400;letter-spacing:-0.700px">{</div>
<div class="t" style="left:267.00px;top:298px;font-size:14.5px;color:#787878;font-family:'Liberation Mono', monospace;font-weight:400;letter-spacing:-0.700px">14</div>
<div class="t" style="left:327.20px;top:298px;font-size:14.5px;color:#000;font-family:'Liberation Mono', monospace;font-weight:400;letter-spacing:-0.700px">cout &lt;&lt;</div>
<div class="t" style="left:391.20px;top:298px;font-size:14.5px;color:#2a00ff;font-family:'Liberation Mono', monospace;font-weight:400;letter-spacing:-0.700px">"!!!Hello beaglebone black123!!!"</div>
<div class="t" style="left:663.20px;top:298px;font-size:14.5px;color:#000;font-family:'Liberation Mono', monospace;font-weight:400;letter-spacing:-0.700px">&lt;&lt;</div>
<div class="t" style="left:687.20px;top:298px;font-size:14.5px;color:#642880;font-family:'Liberation Mono', monospace;font-weight:700;letter-spacing:-0.700px">endl</div>
<div style="left:503px;top:177px;width:8px;height:16px;border:1px solid #8a8a8a;background:#fff;"></div>
<div style="left:505px;top:189px;width:1px;height:1px;background:#777;"></div>
<div style="left:508px;top:189px;width:1px;height:1px;background:#777;"></div>
<svg style="position:absolute;left:0;top:0" width="912" height="724"><path d="M471 311l2 2l2 -2l2 2l2 -2l2 2l2 -2l2 2l2 -2l2 2l2 -2l2 2l2 -2l2 2l2 -2l2 2l2 -2l2 2l2 -2l2 2l2 -2l2 2l2 -2l2 2l2 -2l2 2l2 -2l2 2l2 -2l2 2l2 -2l2 2l2 -2l2 2l2 -2l2 2l2 -2l2 2l2 -2l2 2l2 -2" stroke="#ff3030" stroke-width="0.8" fill="none"/></svg>
<svg style="position:absolute;left:0;top:0" width="912" height="724"><defs><linearGradient id="thumbh" x1="0" y1="0" x2="0" y2="1"><stop offset="0" stop-color="#fbfbfa"/><stop offset="1" stop-color="#e6e4e1"/></linearGradient><linearGradient id="thumbv" x1="0" y1="0" x2="1" y2="0"><stop offset="0" stop-color="#fbfbfa"/><stop offset="1" stop-color="#e6e4e1"/></linearGradient></defs><rect x="713" y="177" width="26" height="150" fill="#f5f5f5"/><rect x="255" y="311" width="458" height="16" fill="#f5f5f5"/><rect x="713.5" y="177.5" width="12" height="136" rx="6.0" fill="#e3e2e0" stroke="#b1aea8"/><rect x="713.5" y="177.5" width="12" height="98" rx="6.0" fill="url(#thumbv)" stroke="#a9a59f"/><path d="M718 224.0h3M718 226.5h3M718 229.0h3" stroke="#8d8a85" stroke-width="0.8"/><rect x="293.5" y="314.5" width="419" height="12" rx="6.0" fill="#e3e2e0" stroke="#b1aea8"/><rect x="293.5" y="314.5" width="225" height="12" rx="6.0" fill="url(#thumbh)" stroke="#a9a59f"/><path d="M403.5 319v3M406.0 319v3M408.5 319v3" stroke="#8d8a85" stroke-width="0.8"/></svg>
<div style="left:746px;top:144px;width:61px;height:30px;background:linear-gradient(#dde0e8,#ffffff);border-radius:6px 6px 0 0;"></div>
<svg style="position:absolute;left:0;top:0" width="912" height="724"><rect x="752.5" y="153.5" width="5" height="5" fill="#cfe2f8" stroke="#3a80d0"/><rect x="752.5" y="162.5" width="5" height="5" fill="#cfe2f8" stroke="#3a80d0"/><rect x="759.5" y="158.5" width="2.5" height="2.5" fill="#3a80d0"/><path d="M759 155h6M763 159.5h2.5M759 164.5h6" stroke="#3a80d0"/><path d="M789.50 155.50L792.00 155.50L794.00 157.60L796.00 155.50L798.50 155.50L798.50 158.00L796.40 160.00L798.50 162.00L798.50 164.50L796.00 164.50L794.00 162.40L792.00 164.50L789.50 164.50L789.50 162.00L791.60 160.00L789.50 158.00Z" fill="#fff" stroke="#000" stroke-width="1.1" stroke-linejoin="round"/><text x="823" y="162" font-family="Liberation Sans" font-weight="700" font-size="10" fill="#555">»</text><text x="830" y="166.5" font-family="Liberation Sans" font-size="10" fill="#555">2</text><rect x="857.0" y="155.5" width="10" height="3" fill="#fff" stroke="#000"/><rect x="883.0" y="155.5" width="10" height="10" fill="#fff" stroke="#000"/><path d="M882.5 157.5h11" stroke="#000"/><rect x="761.5" y="184.5" width="10" height="9" fill="#e8eef8" stroke="#8ba6cc"/><rect x="763.5" y="187.5" width="10" height="9" fill="#f2f6fb" stroke="#6f90c0"/><path d="M765.5 192h6" stroke="#2f5fa8" stroke-width="1.5"/><path d="M787 184v12M784.5 193.5l2.5 3l2.5-3" stroke="#555" fill="none"/><text x="789.5" y="190.5" font-family="Liberation Serif" font-weight="700" font-size="13" fill="#2a8a7a">a</text><text x="791" y="199" font-family="Liberation Serif" font-weight="700" font-size="13" fill="#8a2a9a">z</text><circle cx="819" cy="190.5" r="5" fill="#5aaee8" stroke="#2a7ac0"/><circle cx="819.5" cy="190.5" r="2.6" fill="#cfe8fa"/><path d="M812.5 183.5L826 197" stroke="#1a3a9a" stroke-width="1.3"/><circle cx="843" cy="192.5" r="3.5" fill="#8a8a8a"/><path d="M837.5 185L851 198" stroke="#1a3a9a" stroke-width="1.3"/><text x="846" y="190" font-family="Liberation Serif" font-size="10" fill="#d0204a">S</text><defs><radialGradient id="gdot" cx="0.4" cy="0.35" r="0.7"><stop offset="0" stop-color="#b8e8b0"/><stop offset="1" stop-color="#3a9a3a"/></radialGradient></defs><circle cx="871.5" cy="190" r="3.8" fill="url(#gdot)" stroke="#2a8a3a" stroke-width="0.6"/><path d="M893 184v13M898 184v13M890 188h11M890 193h11M891 184l10 13" stroke="#000" stroke-width="1.4"/><path d="M764.5 214.5h10l-5 4.5z" fill="#fff" stroke="#000"/><rect x="766" y="239.5" width="4" height="4" fill="#3a80c0"/><path d="M771 239.5h5.5v9h-10.5v-4h5z" fill="#3a80c0"/><rect x="766" y="262" width="7" height="2.5" fill="#d04a5a"/><rect x="766" y="265.5" width="10" height="2.5" fill="#a04ab0"/><rect x="766" y="269" width="7" height="2.5" fill="#3a90c0"/><circle cx="771.5" cy="290.8" r="3.3" fill="url(#gdot)" stroke="#2a7a3a" stroke-width="0.6"/></svg>
<div class="t" style="left:771.10px;top:154px;font-size:14px;color:#000;font-family:'Liberation Sans', sans-serif;font-weight:400;letter-spacing:0.000px;">O</div>
<div class="t" style="left:787.70px;top:237px;font-size:14px;color:#3c3c3c;font-family:'Liberation Sans', sans-serif;font-weight:400;letter-spacing:1.059px;">iostream</div>
<div class="t" style="left:787.70px;top:260px;font-size:14px;color:#3c3c3c;font-family:'Liberation Sans', sans-serif;font-weight:400;letter-spacing:1.605px;">std</div>
<div class="t" style="left:787.70px;top:283px;font-size:14px;color:#3c3c3c;font-family:'Liberation Sans', sans-serif;font-weight:400;letter-spacing:0.842px;">main()</div>
<div class="t" style="left:834.40px;top:283px;font-size:14px;color:#957a45;font-family:'Liberation Sans', sans-serif;font-weight:400;letter-spacing:0.790px;">: int</div>
<div style="left:252px;top:334px;width:657px;height:360px;background:#fff;border-radius:6px;"></div>
<div style="left:253px;top:335px;width:655px;height:30px;background:#dcdcdc;border-radius:5px 5px 0 0;"></div>
<div style="left:696px;top:334px;width:113px;height:31px;background:#fff;border-radius:6px 6px 0 0;"></div>
<svg style="position:absolute;left:0;top:0" width="912" height="724"><defs><linearGradient id="thumbh" x1="0" y1="0" x2="0" y2="1"><stop offset="0" stop-color="#fbfbfa"/><stop offset="1" stop-color="#e6e4e1"/></linearGradient><linearGradient id="thumbv" x1="0" y1="0" x2="1" y2="0"><stop offset="0" stop-color="#fbfbfa"/><stop offset="1" stop-color="#e6e4e1"/></linearGradient></defs><rect x="257.5" y="342.5" width="13" height="14" fill="#f0f0f0" stroke="#b0b8c8"/><circle cx="262" cy="347" r="2.5" fill="#e06a6a"/><path d="M259 355l3-4l3 4z" fill="#f0c060"/><path d="M266 345v10" stroke="#a8b8d0"/><rect x="354.5" y="344.5" width="11" height="12" fill="#f6f2e6" stroke="#d0c090"/><rect x="357" y="342.5" width="6" height="3" fill="#c0c0c0"/><path d="M351 350l3 3l5-6" stroke="#4a8ad0" stroke-width="1.5" fill="none"/><path d="M360 349h4M360 352h4" stroke="#a0b0c0"/><rect x="420" y="343.5" width="12.5" height="9" rx="1" fill="#dfe8f5" stroke="#6a8fc8" stroke-width="1.2"/><path d="M422.5 346.5h5M422.5 349h6" stroke="#6a8fc8"/><path d="M424 354h5M422 356h9" stroke="#6a8fc8" stroke-width="1.2"/><rect x="501.5" y="343.5" width="13" height="12" fill="#f0f4f8" stroke="#98a8bc"/><path d="M502 346.5h12M502 349.5h12M502 352.5h12M505.5 344v11" stroke="#b8c4d4" stroke-width="0.8"/><text x="601" y="349.5" font-family="Liberation Mono" font-size="6.5" fill="#8090a8">1010</text><text x="601" y="355.5" font-family="Liberation Mono" font-size="6.5" fill="#8090a8">0101</text><path d="M714.3 344.0V351.8H706" stroke="#3a4252" stroke-width="1.3" fill="none"/><rect x="705.5" y="343.5" width="8.3" height="7.8" fill="#f2f4ee" stroke="#d6dace" stroke-width="0.8"/><rect x="706.6" y="344.9" width="6" height="5" fill="#1a2aa0"/><rect x="708.3" y="346.7" width="4.3" height="3.2" fill="#3a7ad8"/><path d="M699.2 356.1L703.6 350.1L708.6 354.7L702.4 358.1Z" fill="#dcdcdc" stroke="#8a8a8a" stroke-width="0.6"/><path d="M703.6 350.1L708.6 354.7" stroke="#111" stroke-width="1.1"/><path d="M707.5 352.0l1.5 1.5" stroke="#2a9a3a" stroke-width="1.2"/><path d="M791.00 345.50L793.50 345.50L795.50 347.60L797.50 345.50L800.00 345.50L800.00 348.00L797.90 350.00L800.00 352.00L800.00 354.50L797.50 354.50L795.50 352.40L793.50 354.50L791.00 354.50L791.00 352.00L793.10 350.00L791.00 348.00Z" fill="#fff" stroke="#000" stroke-width="1.1" stroke-linejoin="round"/><rect x="857.0" y="345.5" width="10" height="3" fill="#fff" stroke="#000"/><rect x="883.0" y="345.5" width="10" height="10" fill="#fff" stroke="#000"/><path d="M882.5 347.5h11" stroke="#000"/><path d="M255 367.5H475C490 367.5 492 374 500 384C506 392 509 396.5 516 396.5H905" stroke="#a9a69f" fill="none"/><path d="M274.3 377.5V385.3H266" stroke="#3a4252" stroke-width="1.3" fill="none"/><rect x="265.5" y="377" width="8.3" height="7.8" fill="#f2f4ee" stroke="#d6dace" stroke-width="0.8"/><rect x="266.6" y="378.4" width="6" height="5" fill="#1a2aa0"/><rect x="268.3" y="380.2" width="4.3" height="3.2" fill="#3a7ad8"/><path d="M259 378h2.6v-2.3l3.4 3.2l-3.4 3.2v-2.3h-2.6z" fill="#00dd00"/><path d="M259.2 389.6L263.6 383.6L268.6 388.2L262.4 391.6Z" fill="#dcdcdc" stroke="#8a8a8a" stroke-width="0.6"/><path d="M263.6 383.6L268.6 388.2" stroke="#111" stroke-width="1.1"/><path d="M267.5 385.5l1.5 1.5" stroke="#2a9a3a" stroke-width="1.2"/><path d="M471.50 377.50L474.00 377.50L476.00 379.60L478.00 377.50L480.50 377.50L480.50 380.00L478.40 382.00L480.50 384.00L480.50 386.50L478.00 386.50L476.00 384.40L474.00 386.50L471.50 386.50L471.50 384.00L473.60 382.00L471.50 380.00Z" fill="#fff" stroke="#000" stroke-width="1.1" stroke-linejoin="round"/><rect x="255.5" y="503.5" width="336" height="150" fill="none" stroke="#ff0000"/><rect x="891.5" y="399.5" width="12" height="276" rx="6.0" fill="url(#thumbv)" stroke="#a9a59f"/><path d="M896 535.0h3M896 537.5h3M896 540.0h3" stroke="#8d8a85" stroke-width="0.8"/><rect x="891" y="676" width="13" height="13" fill="#f2f1ef"/><rect x="257.5" y="676.5" width="633" height="12" rx="6.0" fill="#e3e2e0" stroke="#b1aea8"/><rect x="257.5" y="676.5" width="626" height="12" rx="6.0" fill="url(#thumbh)" stroke="#a9a59f"/><path d="M568.0 681v3M570.5 681v3M573.0 681v3" stroke="#8d8a85" stroke-width="0.8"/></svg>
<div class="t" style="left:277.00px;top:344px;font-size:14px;color:#9b9b9b;font-family:'Liberation Sans', sans-serif;font-weight:400;letter-spacing:0.779px;">Problems</div>
<div class="t" style="left:370.90px;top:344px;font-size:14px;color:#9b9b9b;font-family:'Liberation Sans', sans-serif;font-weight:400;letter-spacing:0.233px;">Tasks</div>
<div class="t" style="left:437.00px;top:344px;font-size:14px;color:#9b9b9b;font-family:'Liberation Sans', sans-serif;font-weight:400;letter-spacing:0.453px;">Console</div>
<div class="t" style="left:519.70px;top:344px;font-size:14px;color:#9b9b9b;font-family:'Liberation Sans', sans-serif;font-weight:400;letter-spacing:0.851px;">Properties</div>
<div class="t" style="left:620.80px;top:344px;font-size:14px;color:#9b9b9b;font-family:'Liberation Sans', sans-serif;font-weight:400;letter-spacing:0.231px;">Call Graph</div>
<div class="t" style="left:718.60px;top:344px;font-size:14px;color:#000;font-family:'Liberation Sans', sans-serif;font-weight:400;letter-spacing:0.635px;">Terminals</div>
<div class="t" style="left:279.20px;top:376px;font-size:14px;color:#000;font-family:'Liberation Sans', sans-serif;font-weight:400;letter-spacing:0.354px;">Eclipse_to_BBB_connection</div>
<div class="t" style="left:257.30px;top:401px;font-size:14.5px;color:#000;font-family:'Liberation Mono', monospace;font-weight:400;letter-spacing:-0.700px">root@beaglebone:~# ls</div>
<div class="t" style="left:257.30px;top:418px;font-size:14.5px;color:#000;font-family:'Liberation Mono', monospace;font-weight:400;letter-spacing:-0.700px">Desktop  binaryfiles</div>
<div class="t" style="left:257.30px;top:435px;font-size:14.5px;color:#000;font-family:'Liberation Mono', monospace;font-weight:400;letter-spacing:-0.700px">root@beaglebone:~# pwd</div>
<div class="t" style="left:257.30px;top:452px;font-size:14.5px;color:#000;font-family:'Liberation Mono', monospace;font-weight:400;letter-spacing:-0.700px">/home/root</div>
<div class="t" style="left:257.30px;top:469px;font-size:14.5px;color:#000;font-family:'Liberation Mono', monospace;font-weight:400;letter-spacing:-0.700px">root@beaglebone:~# cd binaryfiles/</div>
<div class="t" style="left:257.30px;top:486px;font-size:14.5px;color:#000;font-family:'Liberation Mono', monospace;font-weight:400;letter-spacing:-0.700px">root@beaglebone:~/binaryfiles# ./zytestc++</div>
<div class="t" style="left:257.30px;top:503px;font-size:14.5px;color:#000;font-family:'Liberation Mono', monospace;font-weight:400;letter-spacing:-0.700px">c language!</div>
<div class="t" style="left:257.30px;top:537px;font-size:14.5px;color:#000;font-family:'Liberation Mono', monospace;font-weight:400;letter-spacing:-0.700px">!!!Hello beaglebone black123!!! c++</div>
<div class="t" style="left:257.30px;top:571px;font-size:14.5px;color:#000;font-family:'Liberation Mono', monospace;font-weight:400;letter-spacing:-0.700px">i = 0</div>
<div class="t" style="left:257.30px;top:588px;font-size:14.5px;color:#000;font-family:'Liberation Mono', monospace;font-weight:400;letter-spacing:-0.700px">i = 1</div>
<div class="t" style="left:257.30px;top:605px;font-size:14.5px;color:#000;font-family:'Liberation Mono', monospace;font-weight:400;letter-spacing:-0.700px">i = 2</div>
<div class="t" style="left:257.30px;top:622px;font-size:14.5px;color:#000;font-family:'Liberation Mono', monospace;font-weight:400;letter-spacing:-0.700px">i = 3</div>
<div class="t" style="left:257.30px;top:639px;font-size:14.5px;color:#000;font-family:'Liberation Mono', monospace;font-weight:400;letter-spacing:-0.700px">i = 4</div>
<div class="t" style="left:257.30px;top:656px;font-size:14.5px;color:#000;font-family:'Liberation Mono', monospace;font-weight:400;letter-spacing:-0.700px">root@beaglebone:~/binaryfiles#</div>
<div style="left:505px;top:655px;width:8px;height:15px;background:#000;"></div>
<svg style="position:absolute;left:0;top:0" width="912" height="724"><g fill="#96948c"><rect x="555" y="701.0" width="2" height="2.5"/><rect x="555" y="706.2" width="2" height="2.5"/><rect x="555" y="711.4" width="2" height="2.5"/><rect x="555" y="716.6" width="2" height="2.5"/></g></svg>
<div style="left:416px;top:104px;width:496px;height:39px;background:linear-gradient(#f1f1f0,#e4e4e3);"></div>
<div style="left:1px;top:140px;width:408px;height:1px;background:#bdbcb9;"></div>
<div style="left:285px;top:111px;width:117px;height:24px;background:linear-gradient(#fdfdfd,#f4f4f4);border:1px solid #b8b5ae;border-radius:3px;"></div>
<div class="t" style="left:289.80px;top:116px;font-size:14px;color:#8c8c8c;font-family:'Liberation Sans', sans-serif;font-weight:400;letter-spacing:0.255px;">Quick Access</div>
<div style="left:757.6px;top:111px;width:70.7px;height:24.7px;background:#cacaca;border:1px solid #9b9b9b;border-radius:3px;"></div>
<svg style="position:absolute;left:0;top:0" width="912" height="141"><rect x="409.5" y="110.5" width="2" height="2.5" fill="#a8a69f"/><rect x="409.5" y="117.7" width="2" height="2.5" fill="#a8a69f"/><rect x="409.5" y="124.9" width="2" height="2.5" fill="#a8a69f"/><rect x="409.5" y="132.1" width="2" height="2.5" fill="#a8a69f"/><rect x="415" y="104" width="1" height="36" fill="#c3c2bf"/><rect x="459" y="116" width="1" height="16" fill="#cfcdc8"/><rect x="427.5" y="118.5" width="11" height="11" fill="#e8f0f8" stroke="#6a6a5a"/><path d="M428 120.5h10" stroke="#4a86c8" stroke-width="2"/><path d="M432.5 121v8M428 124.5h10" stroke="#6a6a5a" stroke-width="0.8"/><path d="M438 114.9Q438.96 117.54 441.6 118.5Q438.96 119.46 438 122.1Q437.04 119.46 434.4 118.5Q437.04 117.54 438 114.9Z" fill="#fff3b8" stroke="#c39a1a" stroke-width="1.1" stroke-linejoin="round"/><path d="M438 116.10000000000001V120.89999999999999M435.59999999999997 118.5H440.40000000000003" stroke="#fffdf0" stroke-width="0.8"/><path d="M470.5 116.5h6l2 2v9h-8z" fill="#f3f5f8" stroke="#c9c4a8"/><path d="M472 120h4M472 122h4M472 124h4" stroke="#9fb0cc" stroke-width="0.8"/><path d="M474.5 123.5q0-1.5 1.5-1.5h2l1 1h5v8h-9.5z" fill="#fbd98a" stroke="#b87a2a"/><rect x="565" y="117" width="6.5" height="12" fill="#e6f4fb"/><rect x="565" y="115" width="6.5" height="2.2" fill="#2a5ab8"/><path d="M565.5 117v11.5M565 120.5h6.5M565 124.5h6.5M567.5 117v11.5h4" stroke="#a08a30" stroke-width="0.9" fill="none"/><rect x="572.6" y="115.6" width="7" height="13.8" rx="1.6" fill="#909cb0" stroke="#3a4a66" stroke-width="1.2"/><rect x="573.8" y="116.9" width="4.6" height="2.2" fill="#d0d4dc"/><rect x="573.8" y="120.2" width="4.6" height="1.6" fill="#b8c0cc"/><rect x="573.9" y="121" width="1.8" height="1" fill="#e02a3a"/><rect x="573.9" y="120" width="1.8" height="0.8" fill="#2aa04a"/><rect x="573.8" y="123" width="4.6" height="5.2" fill="#a0aabb"/><rect x="764.5" y="115.5" width="11" height="11" fill="#f0f4fa" stroke="#6a6a5a"/><path d="M765 117.5h10" stroke="#4a86c8" stroke-width="2"/><path d="M769 118v8M765 121.5h5" stroke="#6a6a5a" stroke-width="0.8"/><rect x="770.5" y="122.5" width="9" height="10" fill="#fbf6e0" stroke="#8a7a40"/><text x="772" y="131" font-family="Liberation Sans" font-weight="700" font-size="8.5" fill="#2a5aa8">c</text><path d="M836 117l3 3M850 117l-3 3M835 123h3M851 123h-3M837 129l2.5 -2.5M849 129l-2.5 -2.5M839 114l1.5 3M847 114l-1.5 3" stroke="#2a5a6a" stroke-width="1.2"/><ellipse cx="843" cy="123" rx="4" ry="5" fill="#9fcf9a" stroke="#2f6a7a" stroke-width="1.1"/><path d="M841 121l3 4" stroke="#e8f5e0" stroke-width="1.2"/></svg>
<div class="t" style="left:492.20px;top:117px;font-size:14px;color:#3c3c3c;font-family:'Liberation Sans', sans-serif;font-weight:400;letter-spacing:0.283px;">Resource</div>
<div class="t" style="left:585.90px;top:117px;font-size:14px;color:#3c3c3c;font-family:'Liberation Sans', sans-serif;font-weight:400;letter-spacing:0.480px;">Remote System Explorer</div>
<div class="t" style="left:785.10px;top:117px;font-size:14px;color:#3c3c3c;font-family:'Liberation Sans', sans-serif;font-weight:400;letter-spacing:-0.090px;">C/C++</div>
<div class="t" style="left:856.10px;top:117px;font-size:14px;color:#3c3c3c;font-family:'Liberation Sans', sans-serif;font-weight:400;letter-spacing:0.642px;">Debug</div>
</body></html>
